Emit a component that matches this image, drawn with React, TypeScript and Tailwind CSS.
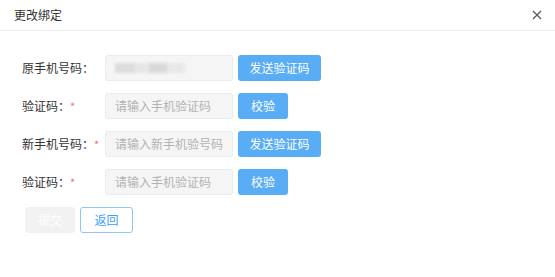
export default function App() {
  const font = { fontFamily: '"Noto Sans CJK SC", "Noto Sans", sans-serif' };

  const Label = ({ text, required }: { text: string; required?: boolean }) => (
    <div className="w-[83px] shrink-0 flex items-center whitespace-nowrap text-[12px] text-[#333]">
      <span>{text}</span>
      {required && <span className="text-[11px] text-[#f56c6c]">*</span>}
    </div>
  );

  const Input = ({ placeholder }: { placeholder: string }) => (
    <div className="w-[128px] h-[26px] border border-[#ebebeb] bg-[#f5f5f5] rounded-[3px] px-[9px] flex items-center text-[12px] text-[#b3b3b3] whitespace-nowrap">
      {placeholder}
    </div>
  );

  const Btn = ({ text, w }: { text: string; w: string }) => (
    <button className={`${w} h-[26px] ml-[5px] rounded-[3px] bg-[#58adf5] text-white text-[12px] flex items-center justify-center`}>
      {text}
    </button>
  );

  return (
    <div className="w-[555px] h-[277px] bg-white" style={font}>
      {/* header */}
      <div className="h-[31px] border-b border-[#ececec] flex items-center justify-between pl-[14px] pr-[13px]">
        <span className="text-[12px] text-[#333]">更改绑定</span>
        <svg width="10" height="10" viewBox="0 0 10 10" className="text-[#555]">
          <path d="M1 1L9 9M9 1L1 9" stroke="currentColor" strokeWidth="1.2" />
        </svg>
      </div>

      {/* form */}
      <div className="pl-[22px] pt-[24px] flex flex-col gap-[12px]">
        <div className="flex items-center h-[26px]">
          <Label text="原手机号码：" />
          <div className="w-[128px] h-[26px] border border-[#ebebeb] bg-[#f5f5f5] rounded-[3px] px-[9px] flex items-center">
            <div className="flex h-[10px] blur-[1.5px]">
              <div className="w-[20px] bg-[#dcdcdc]" />
              <div className="w-[14px] bg-[#e6e6e6]" />
              <div className="w-[18px] bg-[#d8d8d8]" />
              <div className="w-[18px] bg-[#e8e8e8]" />
            </div>
          </div>
          <Btn text="发送验证码" w="w-[83px]" />
        </div>
        <div className="flex items-center h-[26px]">
          <Label text="验证码：" required />
          <Input placeholder="请输入手机验证码" />
          <Btn text="校验" w="w-[50px]" />
        </div>
        <div className="flex items-center h-[26px]">
          <Label text="新手机号码：" required />
          <Input placeholder="请输入新手机验号码" />
          <Btn text="发送验证码" w="w-[83px]" />
        </div>
        <div className="flex items-center h-[26px]">
          <Label text="验证码：" required />
          <Input placeholder="请输入手机验证码" />
          <Btn text="校验" w="w-[50px]" />
        </div>
        <div className="flex items-center gap-[5px] pl-[3px]">
          <button className="w-[50px] h-[26px] rounded-[3px] bg-[#f2f2f2] text-white text-[12px]">提交</button>
          <button className="w-[53px] h-[26px] rounded-[3px] border border-[#8fc7f7] bg-white text-[#409eff] text-[12px]">返回</button>
        </div>
      </div>
    </div>
  );
}
